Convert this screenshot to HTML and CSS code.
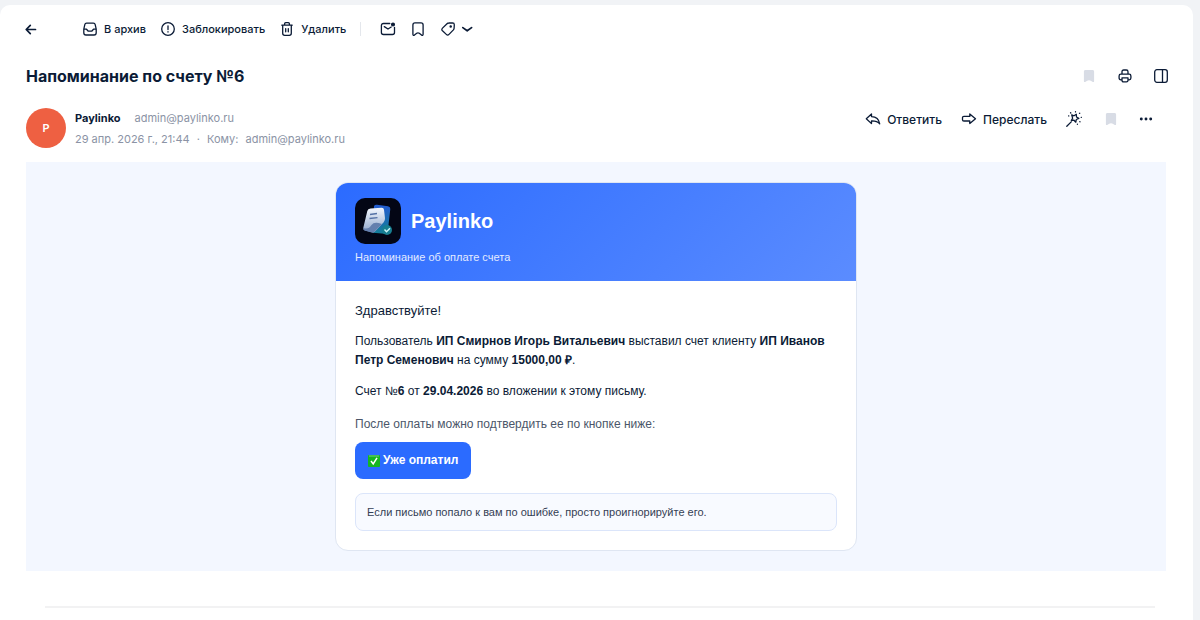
FILE: index.html
```html
<!DOCTYPE html>
<html lang="ru">
<head>
  <meta charset="UTF-8" />
  <meta name="viewport" content="width=device-width, initial-scale=1.0"/>
  <title>Напоминание по счету №6</title>
  <link rel="stylesheet" href="styles.css">
</head>
<body>

  <main class="panel">
    <nav class="toolbar">
      <button class="back" aria-label="Назад">
        <svg class="icon" viewBox="0 0 16 16"><path class="thick" d="M12.5 8.500h-9M7.300 4.400L3.200 8.500l4.100 4.100"/></svg>
      </button>
      <button>
        <svg class="icon" viewBox="0 0 16 16"><path d="M4.600 2.200h6.800c1 0 1.600.5 1.800 1.400l1 4.600v3.600c0 1.400-.8 2.200-2.200 2.200H4c-1.400 0-2.200-.8-2.200-2.200V8.200l1-4.600c.2-.9.8-1.400 1.800-1.400zM1.800 8.200h2.700l1.800 2h3.400l1.800-2h2.700"/></svg>
        В архив
      </button>
      <button>
        <svg class="icon" viewBox="0 0 16 16"><circle cx="8" cy="8" r="6.300"/><path d="M8 4.800v3.700M8 10.700v.4"/></svg>
        Заблокировать
      </button>
      <button>
        <svg class="icon" viewBox="0 0 16 16"><path d="M2.800 4.200h10.400M5.600 4V2.800c0-.7.4-1.100 1.100-1.100h2.600c.7 0 1.100.4 1.100 1.100V4M3.700 4.300v8c0 1.300.7 2 2 2h4.600c1.300 0 2-.7 2-2v-8M6.700 7.600v3.200M9.300 7.600v3.200"/></svg>
        Удалить
      </button>
      <span class="separator"></span>
      <button aria-label="Отметить непрочитанным">
        <svg class="icon" viewBox="0 0 16 16"><path d="M9.800 2.500H3.500c-1.300 0-2.100.8-2.100 2.100v6.800c0 1.300.8 2.100 2.100 2.100h8.900c1.300 0 2.100-.8 2.100-2.100V6.300M4.300 5.600L8 8l3.200-2"/><circle class="solid" cx="13" cy="3.500" r="1.400"/></svg>
      </button>
      <button aria-label="В закладки">
        <svg class="icon" viewBox="0 0 16 16"><path d="M5 1.800h6c1.300 0 2.100.8 2.100 2.100v9.300c0 1.200-.8 1.500-1.600.8L9.300 12.300c-.8-.6-1.800-.6-2.600 0L4.500 14c-.8.700-1.600.4-1.600-.8V3.900c0-1.300.8-2.100 2.100-2.100z"/></svg>
      </button>
      <button class="tag" aria-label="Метки">
        <svg class="icon" viewBox="0 0 16 16"><path d="M8.800 2l3.700-.1c1.100 0 1.800.7 1.800 1.800l-.2 3.500c0 .7-.3 1.200-.7 1.700l-4.400 4.500c-.9.900-1.800.9-2.700 0L2.500 9.800c-.9-.9-.9-1.800 0-2.700L7 2.700c.5-.5 1.100-.7 1.800-.7z"/><circle class="solid" cx="10.700" cy="5.400" r=".6"/></svg>
        <svg class="icon" viewBox="0 0 16 16"><path class="thick" d="M3.800 6.600l4.400 3.200 4.400-3.200"/></svg>
      </button>
    </nav>

    <header class="title-row">
      <h1>Напоминание по счету №6</h1>
      <div class="title-actions">
        <button aria-label="Закладка">
          <svg class="icon muted" viewBox="0 0 16 16"><path d="M4.500 2h7c1 0 1.600.6 1.600 1.600v9.600c0 .8-.5 1.200-1.300.7l-1.600-1c-1.400-.9-3-.9-4.400 0l-1.600 1c-.8.5-1.300.1-1.300-.7V3.600C2.900 2.600 3.500 2 4.500 2z"/></svg>
        </button>
        <button aria-label="Печать">
          <svg class="icon" viewBox="0 0 16 16"><path d="M5 6V3.800C5 2.700 5.600 2 6.700 2h2.600C10.400 2 11 2.700 11 3.800V6M4.700 11.800h-.9c-1.100 0-1.700-.6-1.700-1.700V7.900c0-1.100.6-1.700 1.700-1.700h8.400c1.100 0 1.700.6 1.700 1.700v2.200c0 1.100-.6 1.700-1.700 1.700h-.9M5 9.800h6v2.500c0 1-.6 1.600-1.600 1.600H6.600c-1 0-1.600-.6-1.600-1.600z"/></svg>
        </button>
        <button aria-label="Боковая панель">
          <svg class="icon" viewBox="0 0 16 16"><rect x="1.700" y="1.700" width="12.600" height="12.600" rx="2.200"/><path d="M9.500 1.700v12.600"/></svg>
        </button>
      </div>
    </header>

    <section class="sender">
      <div class="avatar">P</div>
      <div class="sender-info">
        <div><b>Paylinko</b><span class="address">admin@paylinko.ru</span></div>
        <div>29 апр. 2026 г., 21:44 <span class="dot">·</span> Кому: <span class="to">admin@paylinko.ru</span></div>
      </div>
      <div class="message-actions">
        <button>
          <svg class="icon" viewBox="0 0 16 16"><path d="M6.500 2.900v2.700c4.400.2 7.500 2.600 8.200 7.200-2-2.400-4.500-3-8.200-2.900v2.700L1.300 7.700z"/></svg>
          Ответить
        </button>
        <button>
          <svg class="icon" viewBox="0 0 16 16"><path d="M8.800 3v2.400H2.900c-.9 0-1.400.4-1.400 1.200v2.200c0 .8.500 1.200 1.400 1.200h5.900v2.500l5.700-4.800z"/></svg>
          Переслать
        </button>
        <button class="smart" aria-label="Умные действия">
          <svg class="icon" viewBox="0 0 16 16"><path d="M.8 15.300l4.400-4.400M5.700 3.800l2.300 1 2.300-1.500.2 2.700 2.300 1.400-2.500 1.100-.5 2.700-1.800-2-2.700.3 1.300-2.300zM9.500.7v.2M4.600 1.800l.2.200M13.700 2.200l-.2.200M15.200 6.300h.2M2.600 4.900h.2M14 10.800l-.2-.2M11.400 13.300v-.2"/></svg>
        </button>
        <button aria-label="Закладка">
          <svg class="icon muted" viewBox="0 0 16 16"><path d="M4.500 2h7c1 0 1.600.6 1.600 1.600v9.600c0 .8-.5 1.200-1.300.7l-1.600-1c-1.400-.9-3-.9-4.400 0l-1.600 1c-.8.5-1.300.1-1.300-.7V3.600C2.900 2.600 3.500 2 4.500 2z"/></svg>
        </button>
        <button aria-label="Ещё">
          <svg class="icon" viewBox="0 0 16 16"><circle class="solid" cx="3.300" cy="8" r=".8"/><circle class="solid" cx="8" cy="8" r=".8"/><circle class="solid" cx="12.700" cy="8" r=".8"/></svg>
        </button>
      </div>
    </section>

    <div class="mail">
      <article class="card">
        <div class="card-header">
          <div class="brand">
            <svg class="logo" viewBox="0 0 46 46">
              <defs>
                <linearGradient id="paper" x1="0" y1="0" x2="0" y2="1">
                  <stop offset="0" stop-color="#f3f7ff"/>
                  <stop offset="1" stop-color="#8fa6cb"/>
                </linearGradient>
                <linearGradient id="sheet" x1="0" y1="0" x2="0" y2="1">
                  <stop offset="0" stop-color="#245bd0"/>
                  <stop offset="1" stop-color="#147e98"/>
                </linearGradient>
              </defs>
              <rect width="46" height="46" rx="10" fill="#030615"/>
              <path d="M19 8q1-1.500 3-1.200l11 1.400q2.500.4 2.300 2.800l-2.500 22q-.3 3-3 2.800l-12-1z" fill="url(#sheet)"/>
              <path d="M15.500 10.500l11-.8q2.300-.1 2.500 2l1 8.500q.2 2-1.300 4L20 33.500q-1 1.200-3 .8l-7-1.800q-2-.6-1.700-2.700l4-16.800q.5-2.300 3.200-2.500z" fill="url(#paper)"/>
              <path d="M8.500 30q5 2 8-3 2-3 7-2l3.500 1-8 8q-1 1-2.500.6l-7-2q-1.700-.7-1-2.600z" fill="#647fae"/>
              <path d="M15 16.500l7-1M14.500 20.500l8-.8" fill="none" stroke="#5471a6" stroke-width="1.300"/>
              <circle cx="32" cy="32" r="5" fill="#187f91"/>
              <path d="M29.500 31.500l2 2.200 3.500-3.500" fill="none" stroke="#c9f3f7" stroke-width="1.500"/>
            </svg>
            <h2>Paylinko</h2>
          </div>
          <p>Напоминание об оплате счета</p>
        </div>
        <div class="card-body">
          <p class="greeting">Здравствуйте!</p>
          <p>Пользователь <b>ИП Смирнов Игорь Витальевич</b> выставил счет клиенту <b>ИП Иванов Петр Семенович</b> на сумму <b>15000,00 ₽</b>.</p>
          <p>Счет №<b>6</b> от <b>29.04.2026</b> во вложении к этому письму.</p>
          <p class="hint">После оплаты можно подтвердить ее по кнопке ниже:</p>
          <button class="pay">
            <svg class="check" viewBox="0 0 12 12"><rect width="12" height="12" rx="1" fill="#16b622"/><path d="M1 1h10" stroke="#79c981"/><path d="M3 6l2.200 3L9 2.800" fill="none" stroke="#fff" stroke-width="1.500"/></svg>
            Уже оплатил
          </button>
          <div class="note">Если письмо попало к вам по ошибке, просто проигнорируйте его.</div>
        </div>
      </article>
    </div>

    <hr class="end-line">
  </main>

</body>
</html>
```
FILE: styles.css
```css
* {margin: 0; padding: 0; box-sizing: border-box;}
body {
  font-family: Inter, sans-serif;
  font-size: 11px;
  background: #f1f3f6;
  color: #0b1b36;
  padding: 5px 7px 0 0;
}

button {
  display: flex;
  align-items: center;
  gap: 6px;
  border: none;
  background: none;
  color: inherit;
  font: inherit;
  font-weight: 500;
  cursor: pointer;
}

.icon {
  display: block;
  width: 16px;
  height: 16px;
  fill: none;
  stroke: currentColor;
  stroke-width: 1.3;
  stroke-linecap: round;
  stroke-linejoin: round;
}
.icon .thick {
  stroke-width: 1.7;
}
.icon .solid {
  fill: currentColor;
}
.icon.muted {
  fill: #d8dce5;
  stroke: none;
}

.panel {
  min-height: calc(100vh - 5px);
  background: #fff;
  border-radius: 10px 10px 0 0;
  padding: 0 27px 0 26px;
}

.toolbar {
  display: flex;
  align-items: center;
  gap: 14px;
  height: 48px;
}
.toolbar .back {
  margin: 0 29px 0 -3px;
}
.toolbar .tag {
  gap: 3px;
}
.separator {
  width: 1px;
  height: 14px;
  margin-right: 5px;
  background: #e4e7ec;
}

.title-row {
  display: flex;
  align-items: center;
  justify-content: space-between;
  height: 46px;
  margin-right: -3px;
}
.title-row h1 {
  font-size: 16px;
  font-weight: 700;
}
.title-actions {
  display: flex;
  gap: 20px;
}

.sender {
  display: flex;
  gap: 9px;
  padding: 9px 0 12px;
}
.avatar {
  display: flex;
  align-items: center;
  justify-content: center;
  width: 40px;
  height: 40px;
  border-radius: 50%;
  background: #ee6042;
  color: #fff;
  font-weight: 600;
}
.sender-info {
  flex: 1;
  line-height: 21px;
  color: #8b93a5;
}
.sender-info b {
  color: #0b1b36;
  font-weight: 700;
}
.address {
  margin-left: 14px;
}
.dot {
  margin: 0 4px;
}
.to {
  margin-left: 4px;
}
.message-actions {
  display: flex;
  align-items: center;
  gap: 19px;
  height: 22px;
  margin-right: 12px;
}
.message-actions button {
  font-size: 12px;
}
.message-actions .smart {
  margin-right: 2px;
}

.mail {
  padding: 20px;
  background: #f3f7ff;
  font-family: "Liberation Sans", Arial, sans-serif;
}
.card {
  max-width: 522px;
  margin: 0 auto;
  background: #fff;
  border: 1px solid #dfe6f2;
  border-radius: 13px;
  overflow: hidden;
}
.card-header {
  padding: 15px 19px 16px;
  background: linear-gradient(135deg, #2b6bff, #5b8cff);
  color: #fff;
}
.brand {
  display: flex;
  align-items: center;
  gap: 10px;
}
.logo {
  width: 46px;
  height: 46px;
}
.brand h2 {
  font-size: 20px;
}
.card-header p {
  margin-top: 5px;
  font-size: 11px;
  line-height: 16px;
  color: #e3ebff;
}

.card-body {
  padding: 20px 19px 19px;
  font-size: 12px;
  line-height: 19px;
}
.card-body p {
  margin-bottom: 12px;
}
.card-body .greeting {
  font-size: 13px;
}
.card-body .hint {
  margin: 14px 0 8px;
  color: #4b5669;
}
.pay {
  gap: 3px;
  height: 37px;
  padding: 0 13px;
  background: #2b6bff;
  border-radius: 8px;
  color: #fff;
  font-size: 12px;
  font-weight: bold;
}
.check {
  width: 12px;
  height: 12px;
}
.note {
  margin-top: 14px;
  padding: 9px 11px;
  background: #f8faff;
  border: 1px solid #dbe5fa;
  border-radius: 8px;
  font-size: 11px;
  line-height: 18px;
  color: #344054;
}

.end-line {
  height: 2px;
  margin: 35px 11px 0 19px;
  border: none;
  background: #f2f2f3;
}
```
